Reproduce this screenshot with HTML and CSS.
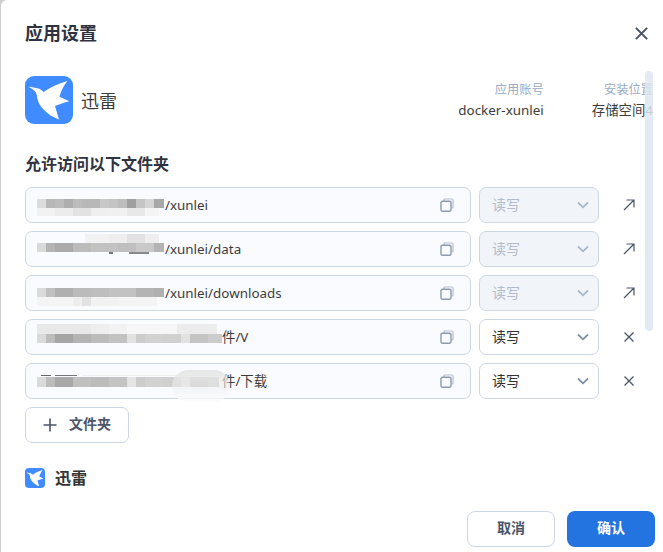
FILE: index.html
```html
<!DOCTYPE html>
<html lang="zh-CN">
<head>
<meta charset="utf-8">
<title>应用设置</title>
<link rel="stylesheet" href="styles.css">
</head>
<body>
<svg class="defs" width="0" height="0" aria-hidden="true">
  <symbol id="bird" viewBox="0 0 48 48"><path d="M3.3 10.7C7 11.2 10.5 11.6 13.5 12.6C15.5 13.3 17 14.5 18.5 16C25 11.5 33 7.5 42.3 5C38.5 10 36 15 34.5 20.8L44.3 25.2C39 26.5 34.5 28 30 30L34 43.6C27.5 41 23 38 19.5 34.5C15.5 30.5 13 26.5 12.4 22.5C12 19.5 11.6 17.5 10.4 15.7C8.5 13.5 6 12.2 3.3 10.7Z"/></symbol>
  <symbol id="copy" viewBox="0 0 14 14"><path d="M4 3V2a1 1 0 0 1 1-1h7a1 1 0 0 1 1 1v7a1 1 0 0 1-1 1h-1" fill="none" stroke="#b4c0d2" stroke-width="1.2"/><rect x="1" y="3.2" width="10" height="10" rx="1.4" fill="none" stroke="#8a9ab2" stroke-width="1.4"/></symbol>
  <symbol id="chev" viewBox="0 0 12 8"><path d="M1 1.5L6 6.3L11 1.5" fill="none" stroke-width="1.8"/></symbol>
  <symbol id="arrow" viewBox="0 0 12 12"><path d="M1 11L11 1M3.5 1H11V8.5" fill="none" stroke="#4b5568" stroke-width="1.2"/></symbol>
  <symbol id="cross" viewBox="0 0 12 12"><path d="M1.5 1.5L10.5 10.5M10.5 1.5L1.5 10.5" fill="none" stroke="#4b5568" stroke-width="1.3"/></symbol>
</svg>
<main class="modal">
  <header class="head">
    <h1 class="title">应用设置</h1>
    <svg class="close" viewBox="0 0 12 12"><path d="M0.8 0.8L11.2 11.2M11.2 0.8L0.8 11.2" fill="none" stroke="#4b5568" stroke-width="1.9"/></svg>
  </header>
  <section class="info">
    <svg class="logo"><use href="#bird"/></svg>
    <span class="app-name">迅雷</span>
    <div class="meta">
      <span class="meta-label">应用账号</span>
      <span class="meta-value">docker-xunlei</span>
    </div>
    <div class="meta">
      <span class="meta-label">安装位置</span>
      <span class="meta-value">存储空间4</span>
    </div>
  </section>
  <h2 class="sub">允许访问以下文件夹</h2>
  <div class="rows">
    <div class="row">
      <div class="field"><span class="mosaic m1"></span><span class="path">/xunlei</span><svg class="copy"><use href="#copy"/></svg></div>
      <div class="select off"><span>读写</span><svg class="chev"><use href="#chev"/></svg></div>
      <svg class="act"><use href="#arrow"/></svg>
    </div>
    <div class="row">
      <div class="field"><span class="mosaic m2"></span><span class="path">/xunlei/data</span><svg class="copy"><use href="#copy"/></svg></div>
      <div class="select off"><span>读写</span><svg class="chev"><use href="#chev"/></svg></div>
      <svg class="act"><use href="#arrow"/></svg>
    </div>
    <div class="row">
      <div class="field"><span class="mosaic m3"></span><span class="path">/xunlei/downloads</span><svg class="copy"><use href="#copy"/></svg></div>
      <div class="select off"><span>读写</span><svg class="chev"><use href="#chev"/></svg></div>
      <svg class="act"><use href="#arrow"/></svg>
    </div>
    <div class="row">
      <div class="field"><span class="mosaic m4"></span><span class="path">件/V</span><svg class="copy"><use href="#copy"/></svg></div>
      <div class="select"><span>读写</span><svg class="chev"><use href="#chev"/></svg></div>
      <svg class="act"><use href="#cross"/></svg>
    </div>
    <div class="row">
      <div class="field"><span class="mosaic m5"></span><span class="path">件/下载</span><svg class="copy"><use href="#copy"/></svg><span class="smudge"></span></div>
      <div class="select"><span>读写</span><svg class="chev"><use href="#chev"/></svg></div>
      <svg class="act"><use href="#cross"/></svg>
    </div>
  </div>
  <button class="add" type="button"><svg class="plus" viewBox="0 0 14 14"><path d="M7 0.5V13.5M0.5 7H13.5" fill="none" stroke="#4b5568" stroke-width="1.6"/></svg><span class="add-text">文件夹</span></button>
  <div class="perm">
    <svg class="logo-sm"><use href="#bird"/></svg>
    <span class="perm-name">迅雷</span>
  </div>
  <footer class="foot">
    <button class="btn ghost" type="button">取消</button>
    <button class="btn primary" type="button">确认</button>
  </footer>
  <div class="scrollbar"></div>
</main>
</body>
</html>
```
FILE: styles.css
```css
* { box-sizing: border-box; }
html, body { margin: 0; height: 100%; }
body {
  background: #cfcfcf;
  overflow: hidden;
  font-family: "Noto Sans", "Noto Sans CJK SC", sans-serif;
  color: #333;
}
.defs { position: absolute; }
.modal {
  position: relative;
  margin-left: 1px;
  height: 552px;
  width: 662px;
  background: #fff;
  border-top-left-radius: 6px;
  padding: 0 8px 5px 24px;
  display: flex;
  flex-direction: column;
  overflow: hidden;
}
.head {
  height: 66px;
  display: flex;
  align-items: center;
  justify-content: space-between;
  flex: none;
}
.title { margin: 0; font-size: 18px; font-weight: 700; line-height: 24px; color: #2f3340; }
.close { width: 13px; height: 13px; margin-right: 7px; }
.info {
  flex: none;
  height: 77px;
  margin-top: 10px;
  display: flex;
  align-items: flex-start;
  overflow: hidden;
}
.logo { width: 48px; height: 48px; background: #3f8bff; border-radius: 9px; fill: #fff; flex: none; }
.app-name { font-size: 18px; line-height: 50px; margin-left: 8px; flex: 1; color: #3a3a3a; }
.meta { display: flex; flex-direction: column; align-items: flex-end; margin-left: 48px; margin-top: 6px; }
.meta:last-child { margin-right: 2px; }
.meta-label { font-size: 12.25px; line-height: 16px; color: #9aabc4; }
.meta-value { font-size: 13.4px; line-height: 20px; margin-top: 2px; color: #3c3c3c; white-space: nowrap; }
.sub { margin: 0 0 12px; font-size: 16px; font-weight: 700; line-height: 22px; color: #2f3340; flex: none; }
.rows { display: flex; flex-direction: column; gap: 8px; flex: none; }
.row { display: flex; align-items: center; height: 36px; }
.field {
  position: relative;
  width: 446px;
  height: 36px;
  border: 1px solid #cdd7e4;
  border-radius: 7px;
  background: #fafbfe;
  display: flex;
  align-items: center;
  padding: 0 16px 0 11px;
  font-size: 13.4px;
  color: #3c3c3c;
}
.path { flex: 1; line-height: 34px; }
.copy { width: 14px; height: 14px; flex: none; margin-top: -1px; }
.mosaic { flex: none; align-self: stretch; background-repeat: no-repeat; }
.m1 {
  width: 128px;
  background-image:
    linear-gradient(90deg, #dcdcdc 0 9px, #b7b7b7 0 18px, #bcbcbc 0 27px, #aeaeae 0 36px, #bcbcbc 0 45px, #b8b8b8 0 63px, #c8c8c8 0 72px, #c4c4c4 0 81px, #bdbdbd 0 90px, #9f9f9f 0 99px, #c5c5c5 0 108px, #d5d5d5 0 117px, #a8a8a8 0 126px),
    linear-gradient(90deg, #f2f2f2 0 18px, #ececec 0 36px, #e2e2e2 0 54px, #efefef 0 72px, #f0f0f0 0 90px, #e8e8e8 0 108px, #f4f4f4 0 122px);
  background-size: 127px 9px, 122px 8px;
  background-position: 0 11px, 0 20px;
}
.m2 {
  width: 128px;
  background-image:
    linear-gradient(90deg, #dadada 0 9px, #b4b4b4 0 18px, #aaa 0 36px, #bbb 0 54px, #c2c2c2 0 81px, #bfbfbf 0 99px, #c9c9c9 0 117px, #b4b4b4 0 126px),
    linear-gradient(90deg, #fafbfe 0 48px, #f2f2f2 0 72px, #eee 0 90px, #e2e2e2 0 108px, #eee 0 122px),
    linear-gradient(90deg, #fafbfe 0 72px, #777 0 76px, #fafbfe 0 92px, #888 0 112px, #fafbfe 0 127px);
  background-size: 127px 9px, 122px 9px, 127px 2px;
  background-position: 0 11px, 0 2px, 0 20px;
}
.m3 {
  width: 128px;
  background-image:
    linear-gradient(90deg, #dadada 0 9px, #c0c0c0 0 18px, #b0b0b0 0 36px, #bbb 0 54px, #bebebe 0 72px, #c2c2c2 0 99px, #b4b4b4 0 117px, #b0b0b0 0 126px),
    linear-gradient(90deg, #f4f4f4 0 36px, #eee 0 45px, #e2e2e2 0 54px, #f2f2f2 0 81px, #f4f4f4 0 120px);
  background-size: 127px 9px, 120px 9px;
  background-position: 0 12px, 0 21px;
}
.m4 {
  width: 185px;
  background-image:
    linear-gradient(90deg, #dadada 0 9px, #bcbcbc 0 18px, #a5a5a5 0 36px, #b4b4b4 0 54px, #bcbcbc 0 72px, #c2c2c2 0 90px, #e2e2e2 0 99px, #ccc 0 108px, #d2d2d2 0 126px, #d0d0d0 0 144px, #e2e2e2 0 153px, #c4c4c4 0 171px, #ccc 0 185px),
    linear-gradient(90deg, #e8e8e8 0 54px, #eee 0 72px, #f2f2f2 0 90px, #f6f6f6 0 140px, #ececec 0 180px);
  background-size: 185px 9px, 180px 10px;
  background-position: 0 14px, 0 4px;
}
.m5 {
  width: 185px;
  background-image:
    linear-gradient(90deg, #dadada 0 9px, #bcbcbc 0 18px, #a8a8a8 0 36px, #c0c0c0 0 54px, #bcbcbc 0 72px, #c4c4c4 0 90px, #e4e4e4 0 99px, #ccc 0 108px, #d2d2d2 0 126px, #d0d0d0 0 144px, #e2e2e2 0 153px, #c4c4c4 0 171px, #ccc 0 182px, #fafbfe 0 185px),
    linear-gradient(90deg, #fafbfe 0 4px, #666 0 14px, #fafbfe 0 18px, #777 0 40px, #fafbfe 0 45px, #eee 0 185px);
  background-size: 185px 10px, 185px 1px;
  background-position: 0 13px, 0 11px;
}
.smudge {
  position: absolute;
  left: 146px;
  top: 6px;
  width: 58px;
  height: 32px;
  border-radius: 20px;
  background: linear-gradient(180deg, rgba(228, 228, 228, 0.9), rgba(238, 238, 238, 0.5) 55%, rgba(252, 252, 252, 0.9));
}
.select {
  width: 120px;
  height: 36px;
  margin-left: 8px;
  border: 1px solid #cdd7e4;
  border-radius: 7px;
  background: #fff;
  display: flex;
  align-items: center;
  justify-content: space-between;
  padding: 0 9px 2px 12px;
  font-size: 14px;
  color: #333;
  stroke: #7e8fa9;
}
.select.off { background: #f1f4f9; color: #b2bccb; stroke: #aab6c8; }
.chev { width: 12px; height: 8px; margin-top: 2px; }
.act { width: 12px; height: 12px; margin-left: 24px; flex: none; }
.add {
  margin-top: 8px;
  width: 104px;
  height: 36px;
  flex: none;
  border: 1px solid #cdd7e4;
  border-radius: 7px;
  background: #fff;
  display: flex;
  align-items: center;
  justify-content: center;
  gap: 12px;
  font: 700 14px "Noto Sans", "Noto Sans CJK SC", sans-serif;
  color: #4b5568;
  padding: 0;
}
.add-text { margin-top: -4px; }
.plus { width: 14px; height: 14px; }
.perm { margin-top: 24px; display: flex; align-items: center; flex: none; }
.logo-sm { width: 20px; height: 20px; background: #3f8bff; border-radius: 4px; fill: #fff; flex: none; }
.perm-name { margin-left: 10px; margin-top: 1px; font-size: 16px; font-weight: 700; line-height: 20px; color: #333; }
.foot { margin-top: auto; display: flex; justify-content: flex-end; gap: 12px; flex: none; }
.btn {
  width: 88px;
  height: 36px;
  border-radius: 8px;
  font: 700 14px "Noto Sans", "Noto Sans CJK SC", sans-serif;
  padding: 0 0 4px;
}
.ghost { background: #fff; border: 1px solid #cdd7e4; color: #4b5568; }
.primary { background: #2373e0; border: 0; color: #fff; }
.scrollbar {
  position: absolute;
  left: 644px;
  top: 71px;
  width: 8px;
  height: 260px;
  border-radius: 4px;
  background: rgba(222, 230, 240, 0.85);
}
```
